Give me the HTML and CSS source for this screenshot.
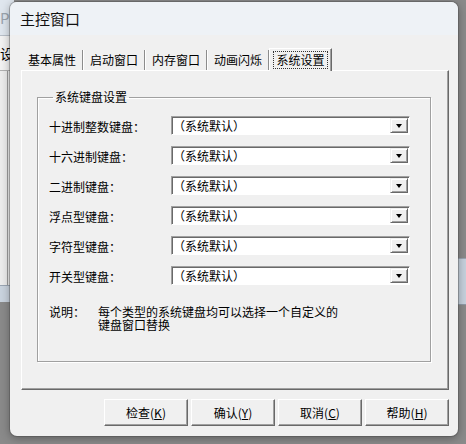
FILE: index.html
```html
<!DOCTYPE html>
<html lang="zh-CN">
<head>
<meta charset="utf-8">
<title>主控窗口</title>
<link rel="stylesheet" href="styles.css">
</head>
<body>
<div class="desk-left">
  <div class="dl-title">PP</div>
  <div class="dl-menu">设置</div>
  <div class="dl-body"></div>
  <div class="dl-bar"></div>
</div>
<div class="desk-right"></div>

<div class="window">
  <div class="titlebar">主控窗口</div>
  <div class="client">
    <div class="tabs">
      <div class="tab">基本属性</div>
      <div class="tab">启动窗口</div>
      <div class="tab">内存窗口</div>
      <div class="tab">动画闪烁</div>
      <div class="tab active"><span class="focus">系统设置</span></div>
    </div>
    <div class="panel">
      <fieldset class="group">
        <legend>系统键盘设置</legend>
        <div class="rows">
          <div class="row"><span class="lbl">十进制整数键盘：</span><div class="combo"><span class="val">（系统默认）</span><span class="drop"><i></i></span></div></div>
          <div class="row"><span class="lbl">十六进制键盘：</span><div class="combo"><span class="val">（系统默认）</span><span class="drop"><i></i></span></div></div>
          <div class="row"><span class="lbl">二进制键盘：</span><div class="combo"><span class="val">（系统默认）</span><span class="drop"><i></i></span></div></div>
          <div class="row"><span class="lbl">浮点型键盘：</span><div class="combo"><span class="val">（系统默认）</span><span class="drop"><i></i></span></div></div>
          <div class="row"><span class="lbl">字符型键盘：</span><div class="combo"><span class="val">（系统默认）</span><span class="drop"><i></i></span></div></div>
          <div class="row"><span class="lbl">开关型键盘：</span><div class="combo"><span class="val">（系统默认）</span><span class="drop"><i></i></span></div></div>
        </div>
        <div class="note">
          <span class="note-lbl">说明：</span>
          <span class="note-txt">每个类型的系统键盘均可以选择一个自定义的<br>键盘窗口替换</span>
        </div>
      </fieldset>
    </div>
    <div class="buttons">
      <div class="btn">检查(<u>K</u>)</div>
      <div class="btn">确认(<u>Y</u>)</div>
      <div class="btn">取消(<u>C</u>)</div>
      <div class="btn">帮助(<u>H</u>)</div>
    </div>
  </div>
</div>
</body>
</html>
```
FILE: styles.css
```css
html, body {
  margin: 0;
  padding: 0;
}
body {
  width: 466px;
  height: 444px;
  overflow: hidden;
  position: relative;
  background: #8a8a8a;
  font-family: "Noto Sans CJK SC", "Liberation Sans", sans-serif;
  font-size: 12px;
  color: #000;
}

/* background desktop windows */
.desk-left {
  position: absolute;
  left: 0;
  top: 0;
  width: 14px;
  height: 302px;
  display: flex;
  flex-direction: column;
  overflow: hidden;
}
.dl-title {
  height: 35px;
  background: #dfe6ee;
  color: #9aa3ad;
  font-size: 15px;
  line-height: 35px;
  white-space: nowrap;
  border-bottom: 1px solid #b8bfc8;
}
.dl-menu {
  height: 34px;
  background: #f2f2f2;
  font-size: 14px;
  line-height: 34px;
  white-space: nowrap;
  border-bottom: 1px solid #b0b0b0;
}
.dl-body {
  flex: 1;
  background: #ececec;
  box-shadow: inset -6px 0 0 #ececec, inset -7px 0 0 #9c9c9c;
}
.dl-bar {
  height: 16px;
  background: #c9d3de;
  border-top: 1px solid #9aa5b2;
}
.desk-right {
  position: absolute;
  right: 0;
  top: 258px;
  width: 10px;
  height: 45px;
  background: #c6d1dd;
  border-top: 1px solid #9aa5b2;
  border-bottom: 1px solid #8f9aa6;
}

/* main window */
.window {
  position: absolute;
  left: 10px;
  top: 2px;
  width: 448px;
  height: 434px;
  border-radius: 7px;
  background: #f0f0f0;
  box-shadow: 0 0 0 1px rgba(70,70,70,0.35), 0 2px 10px rgba(0,0,0,0.35);
  overflow: hidden;
  display: flex;
  flex-direction: column;
}
.titlebar {
  height: 33px;
  background: #eef2f6;
  font-size: 15px;
  line-height: 33px;
  padding-left: 10px;
  color: #111;
}
.client {
  flex: 1;
  display: flex;
  flex-direction: column;
  padding: 11px 9px 0 11px;
}

/* tabs */
.tabs {
  display: flex;
  align-items: flex-end;
  height: 24px;
  padding-left: 1px;
  position: relative;
  z-index: 1;
}
.tab {
  height: 20px;
  line-height: 20px;
  padding: 0 5px;
  width: 50px;
  text-align: center;
  border-left: 1px solid #ffffff;
  border-right: 1px solid #8c8c8c;
  white-space: nowrap;
}
.tab:first-child {
  border-left: none;
}
.tab.active {
  height: 23px;
  line-height: 21px;
  padding: 0 4px;
  border-top: 1px solid #ffffff;
  border-left: 1px solid #ffffff;
  border-right: 1px solid #696969;
  box-shadow: inset -1px 0 0 #a0a0a0;
  background: #f0f0f0;
  margin-bottom: -1px;
  box-sizing: border-box;
  width: 63px;
}
.focus {
  display: inline-block;
  line-height: 16px;
  padding: 0 2px;
  outline: 1px dotted #333;
  outline-offset: 0;
}

/* tab panel */
.panel {
  height: 320px;
  box-sizing: border-box;
  border-top: 1px solid #ffffff;
  border-left: 1px solid #ffffff;
  border-right: 1px solid #696969;
  border-bottom: 1px solid #696969;
  box-shadow: inset -1px -1px 0 #a0a0a0;
  padding: 19px 17px 0 15px;
}
.group {
  margin: 0;
  height: 272px;
  box-sizing: border-box;
  border: 1px solid #a0a0a0;
  box-shadow: inset 1px 1px 0 #ffffff, 1px 1px 0 #ffffff;
  padding: 0 0 0 11px;
  min-width: 0;
}
.group legend {
  padding: 0 2px;
  margin-left: 4px;
  line-height: 14px;
  font-size: 12px;
}
.rows {
  display: flex;
  flex-direction: column;
  gap: 11px;
  margin-top: 12px;
}
.row {
  display: flex;
  align-items: center;
  height: 19px;
}
.lbl {
  width: 122px;
  white-space: nowrap;
  line-height: 19px;
  padding-top: 1px;
}
.combo {
  width: 239px;
  height: 19px;
  box-sizing: border-box;
  background: #fff;
  border-top: 1px solid #a0a0a0;
  border-left: 1px solid #a0a0a0;
  border-right: 1px solid #ffffff;
  border-bottom: 1px solid #ffffff;
  box-shadow: inset 1px 1px 0 #696969;
  display: flex;
  align-items: stretch;
  padding: 1px;
}
.val {
  flex: 1;
  line-height: 16px;
  white-space: nowrap;
  font-size: 12px;
}
.drop {
  width: 18px;
  box-sizing: border-box;
  background: #f0f0f0;
  border-top: 1px solid #f0f0f0;
  border-left: 1px solid #f0f0f0;
  border-right: 1px solid #696969;
  border-bottom: 1px solid #696969;
  box-shadow: inset 1px 1px 0 #ffffff, inset -1px -1px 0 #a0a0a0;
  display: flex;
  align-items: center;
  justify-content: center;
}
.drop i {
  display: block;
  width: 0;
  height: 0;
  border-left: 3.5px solid transparent;
  border-right: 3.5px solid transparent;
  border-top: 4px solid #000;
  margin-top: 1px;
}
.note {
  display: flex;
  margin-top: 20px;
  line-height: 13px;
}
.note-lbl {
  width: 49px;
}
.note-txt {
  white-space: nowrap;
}

/* buttons */
.buttons {
  display: flex;
  justify-content: flex-end;
  gap: 3px;
  margin-top: 9px;
}
.btn {
  width: 84px;
  height: 27px;
  box-sizing: border-box;
  text-align: center;
  line-height: 25px;
  border-top: 1px solid #ffffff;
  border-left: 1px solid #ffffff;
  border-right: 1px solid #696969;
  border-bottom: 1px solid #696969;
  box-shadow: inset -1px -1px 0 #a0a0a0;
  background: #f0f0f0;
}
.btn u {
  text-underline-offset: 1px;
}
```
